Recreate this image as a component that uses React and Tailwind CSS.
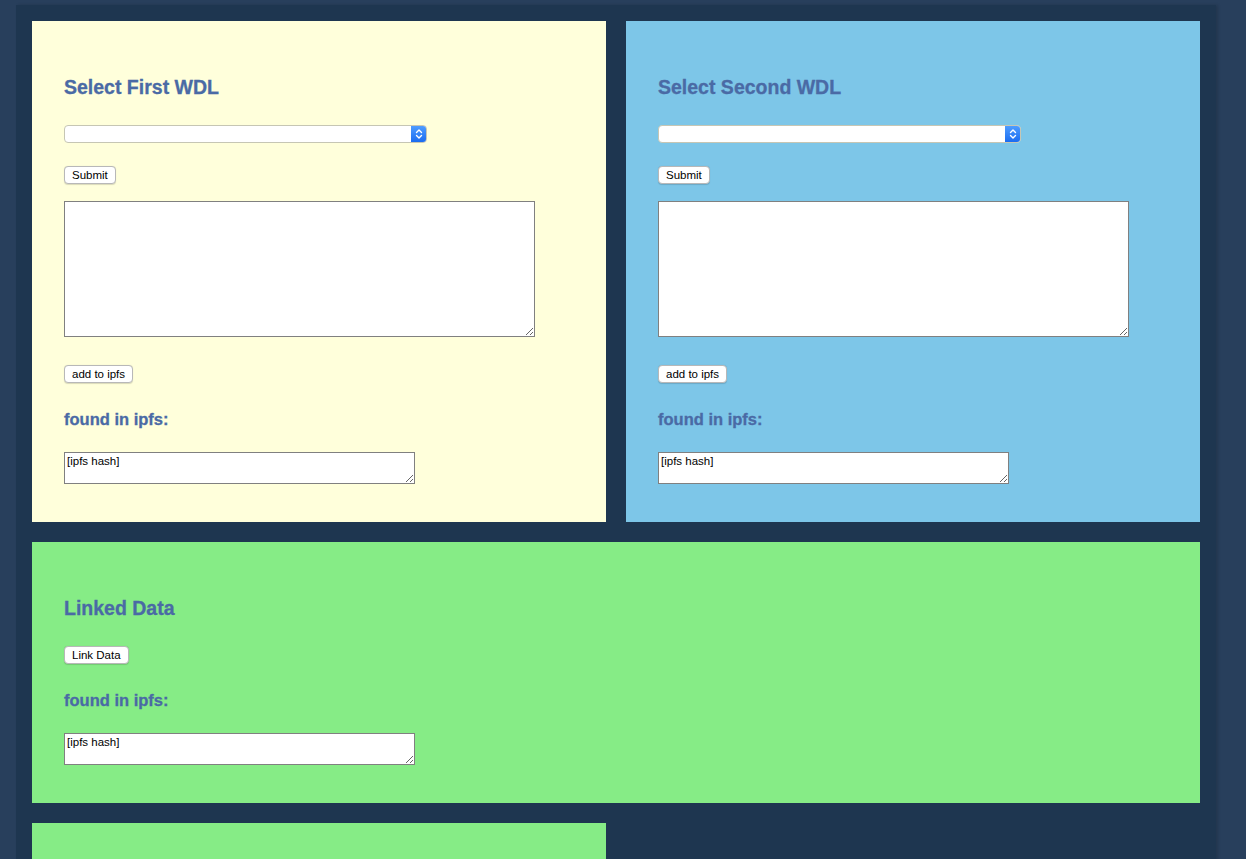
import { useState } from 'react';

const h2Cls =
  "h-[22px] leading-[22px] text-[19.5px] font-bold text-[#4a6aa5] [-webkit-text-stroke:0.3px_#4a6aa5] [font-family:'Liberation_Sans',Arial,sans-serif]";
const h3Cls =
  "h-[22px] leading-[22px] text-[16.5px] font-bold text-[#4a6aa5] [-webkit-text-stroke:0.3px_#4a6aa5] [font-family:'Liberation_Sans',Arial,sans-serif]";

const btnCls =
  "h-[18px] px-[7px] rounded-[4px] border border-[#b8b8b8] bg-white text-[11.5px] leading-[16px] text-black [font-family:'Liberation_Sans',Arial,sans-serif] shadow-[0_0.5px_1px_rgba(0,0,0,0.15)]";

const SelectBox = () => (
  <div className="flex w-[363px] h-[18px] rounded-[4px] border border-[#c6c6b4] bg-white overflow-hidden">
    <div className="flex-1" />
    <div className="w-[15px] h-full bg-gradient-to-b from-[#4e9cff] to-[#1a6cf0] flex items-center justify-center">
      <svg width="8" height="12" viewBox="0 0 8 12" fill="none" stroke="white" strokeWidth="1.4" strokeLinecap="round" strokeLinejoin="round">
        <path d="M1.5 4.5 L4 2 L6.5 4.5" />
        <path d="M1.5 7.5 L4 10 L6.5 7.5" />
      </svg>
    </div>
  </div>
);

const HashBox = () => (
  <textarea
    defaultValue="[ipfs hash]"
    className="block w-[351px] h-[32px] border border-[#808080] bg-white px-[2px] py-[1px] text-[11.5px] leading-[14px] text-black [font-family:'Liberation_Sans',Arial,sans-serif] resize"
  />
);

const WdlPanel = ({ title, bg }) => {
  const [text, setText] = useState('');
  return (
    <div className={`${bg} pl-[32px] pt-[55px] pb-[38px]`}>
      <h2 className={h2Cls}>{title}</h2>
      <div className="mt-[27px]">
        <SelectBox />
      </div>
      <button className={`${btnCls} mt-[23px] block`}>Submit</button>
      <textarea
        value={text}
        onChange={e => setText(e.target.value)}
        className="block mt-[17px] w-[471px] h-[136px] border border-[#808080] bg-white resize"
      />
      <button className={`${btnCls} mt-[28px] block`}>add to ipfs</button>
      <h3 className={`${h3Cls} mt-[25px]`}>found in ipfs:</h3>
      <div className="mt-[22px]">
        <HashBox />
      </div>
    </div>
  );
};

export default function App() {
  return (
    <div className="h-[859px] overflow-hidden bg-[#283f5c] pt-[5px]">
      <div className="ml-[16px] w-[1200px] bg-[#1e3650] p-[16px] shadow-[2px_0_3px_rgba(0,0,0,0.15)] min-h-[900px]">
        <div className="grid grid-cols-2 gap-[20px]">
          <WdlPanel title="Select First WDL" bg="bg-[#ffffdb]" />
          <WdlPanel title="Select Second WDL" bg="bg-[#7dc6e8]" />
        </div>

        <div className="mt-[20px] bg-[#86ec86] pl-[32px] pt-[55px] pb-[38px]">
          <h2 className={h2Cls}>Linked Data</h2>
          <button className={`${btnCls} mt-[27px] block`}>Link Data</button>
          <h3 className={`${h3Cls} mt-[25px]`}>found in ipfs:</h3>
          <div className="mt-[22px]">
            <HashBox />
          </div>
        </div>

        <div className="grid grid-cols-2 gap-[20px] mt-[20px]">
          <div className="bg-[#86ec86] h-[200px]" />
        </div>
      </div>
    </div>
  );
}
